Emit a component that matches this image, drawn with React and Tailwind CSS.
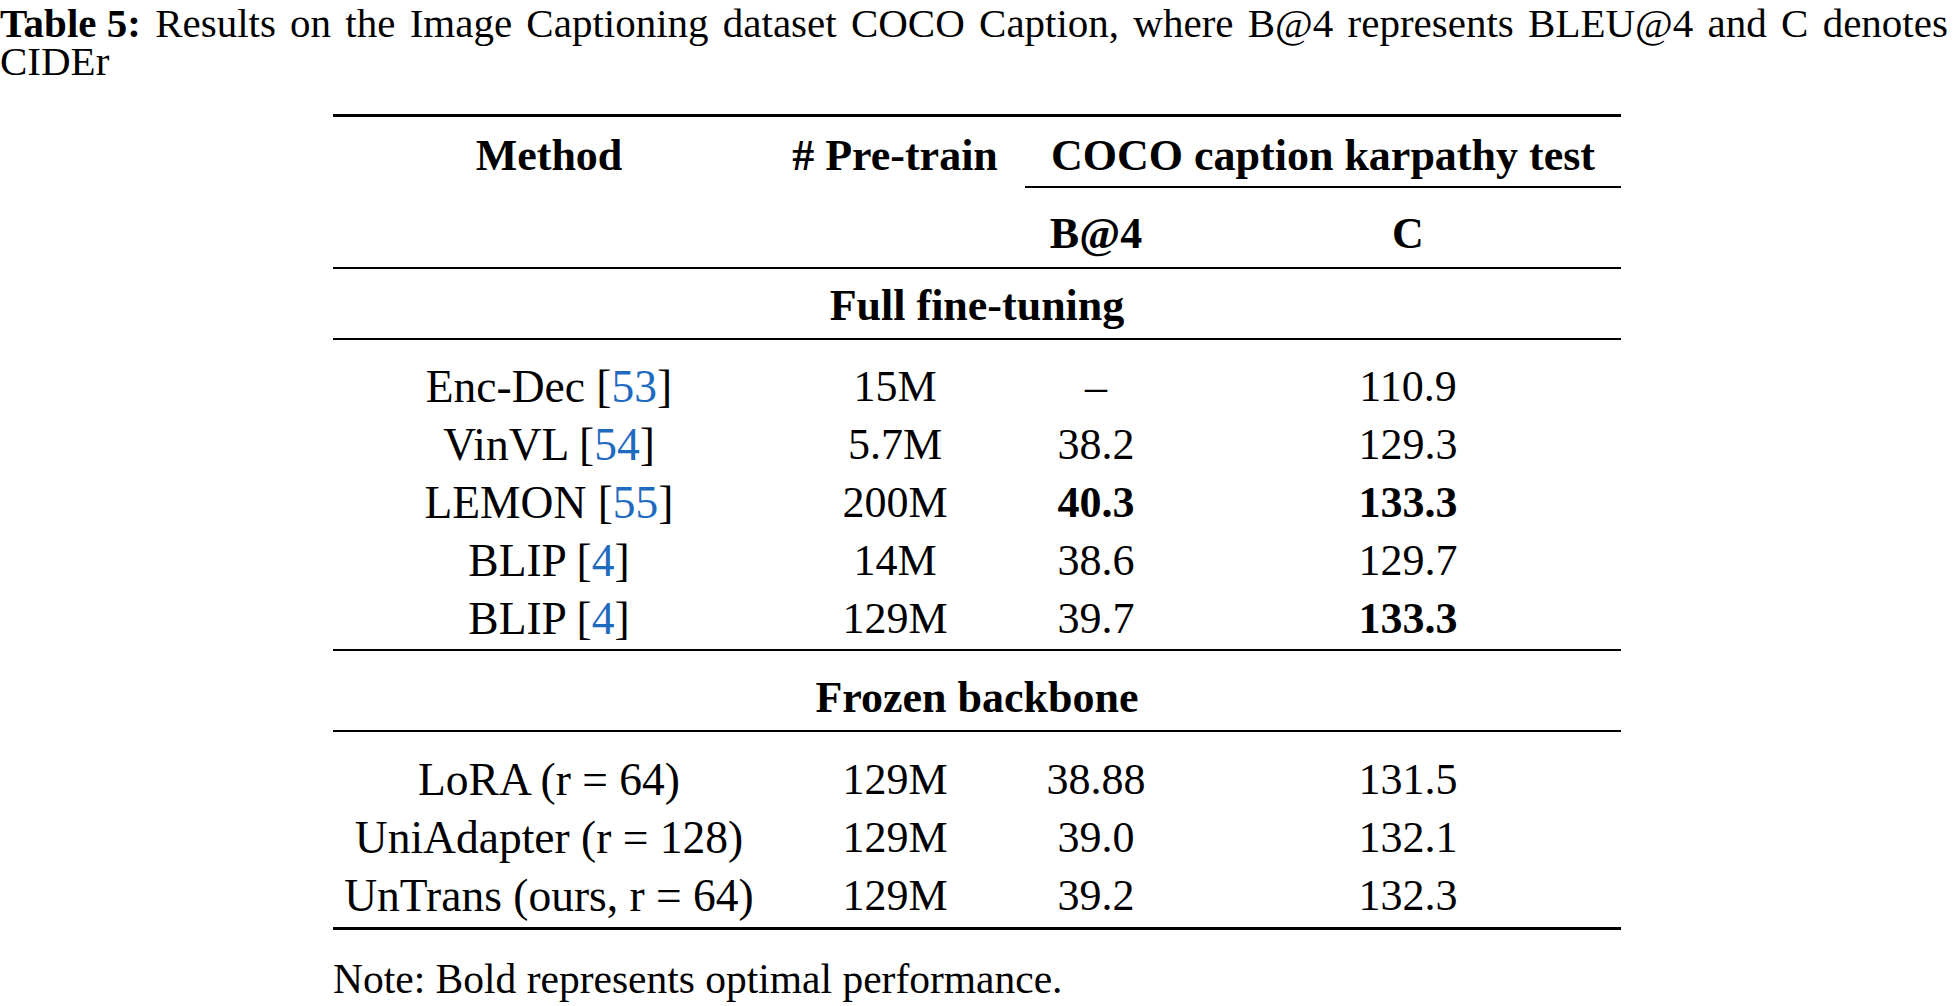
import React from "react";

const Cite = ({ n }) => (
  <>
    [<span className="text-[#1f6bbf]">{n}</span>]
  </>
);

const Rule = ({ thick }) => (
  <div className={thick ? "h-[3px] bg-black" : "h-[2px] bg-black"} />
);

const DataRow = ({ m, p, b, c, bb, cb }) => (
  <div className="grid grid-cols-[432px_260px_142px_454px] h-[58px] items-center">
    <div className="text-center whitespace-nowrap text-[45.5px]">{m}</div>
    <div className="text-center">{p}</div>
    <div className={bb ? "text-center font-bold" : "text-center"}>{b}</div>
    <div className={cb ? "text-center pl-[28px] font-bold" : "text-center pl-[28px]"}>{c}</div>
  </div>
);

export default function App() {
  return (
    <div className="w-[1954px] h-[1006px] bg-white text-black font-['Liberation_Serif',serif] overflow-hidden">
      <div className="pt-[4px] text-[41px] leading-[38px]">
        <div className="w-[1948px] whitespace-nowrap flex justify-between">
          <span className="font-bold">Table 5:</span>
          <span>Results</span>
          <span>on</span>
          <span>the</span>
          <span>Image</span>
          <span>Captioning</span>
          <span>dataset</span>
          <span>COCO</span>
          <span>Caption,</span>
          <span>where</span>
          <span>B@4</span>
          <span>represents</span>
          <span>BLEU@4</span>
          <span>and</span>
          <span>C</span>
          <span>denotes</span>
        </div>
        <div>CIDEr</div>
      </div>

      <div className="ml-[333px] w-[1288px] mt-[34px] text-[44px] leading-[50px]">
        <Rule thick />
        <div className="grid grid-cols-[432px_260px_596px] h-[69px] pt-[9px] items-center font-bold">
          <div className="text-center">Method</div>
          <div className="text-center whitespace-nowrap"># Pre-train</div>
          <div className="text-center whitespace-nowrap">COCO caption karpathy test</div>
        </div>
        <div className="grid grid-cols-[692px_596px]">
          <div />
          <div className="h-[2px] bg-black" />
        </div>
        <div className="grid grid-cols-[432px_260px_142px_454px] h-[79px] pt-[13px] items-center font-bold">
          <div />
          <div />
          <div className="text-center">B@4</div>
          <div className="text-center pl-[28px]">C</div>
        </div>
        <Rule />
        <div className="h-[69px] pt-[5px] flex items-center justify-center font-bold">
          Full fine-tuning
        </div>
        <Rule />
        <div className="pt-[18px] pb-[1px]">
          <DataRow m={<>Enc-Dec <Cite n="53" /></>} p="15M" b="–" c="110.9" />
          <DataRow m={<>VinVL <Cite n="54" /></>} p="5.7M" b="38.2" c="129.3" />
          <DataRow m={<>LEMON <Cite n="55" /></>} p="200M" b="40.3" c="133.3" bb cb />
          <DataRow m={<>BLIP <Cite n="4" /></>} p="14M" b="38.6" c="129.7" />
          <DataRow m={<>BLIP <Cite n="4" /></>} p="129M" b="39.7" c="133.3" cb />
        </div>
        <Rule />
        <div className="h-[79px] pt-[15px] flex items-center justify-center font-bold">
          Frozen backbone
        </div>
        <Rule />
        <div className="pt-[19px] pb-[2px]">
          <DataRow m="LoRA (r = 64)" p="129M" b="38.88" c="131.5" />
          <DataRow m="UniAdapter (r = 128)" p="129M" b="39.0" c="132.1" />
          <DataRow m="UnTrans (ours, r = 64)" p="129M" b="39.2" c="132.3" />
        </div>
        <Rule thick />
      </div>

      <div className="ml-[333px] mt-[29px] text-[41.5px] leading-[40px]">
        Note: Bold represents optimal performance.
      </div>
    </div>
  );
}
